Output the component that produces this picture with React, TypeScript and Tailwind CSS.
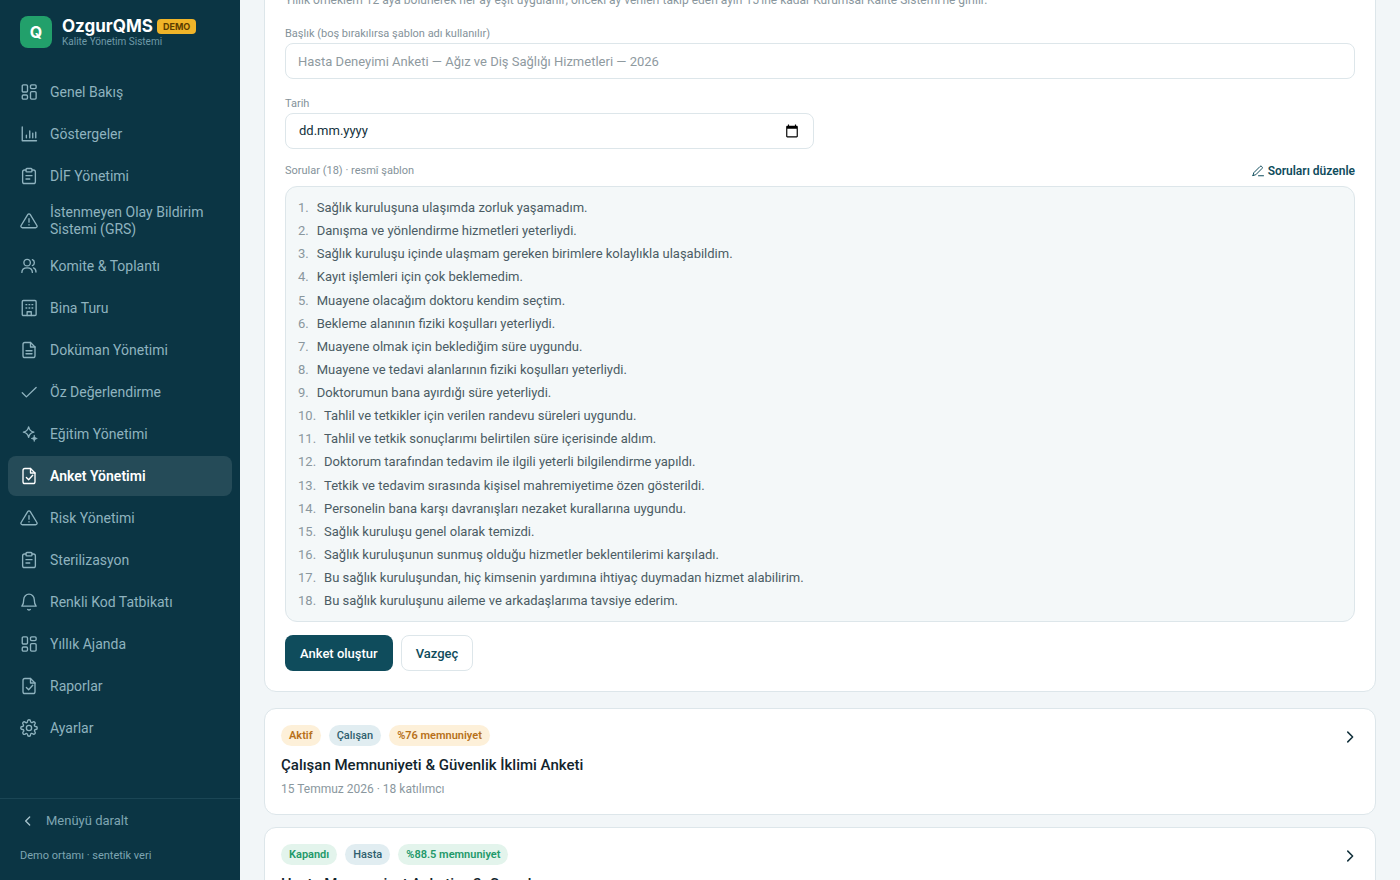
import type { ReactNode } from 'react'

interface NavItem {
  label: string
  icon: keyof typeof icons
  active?: boolean
}

interface Survey {
  id: number
  status: string
  audience: string
  score: string
  closed: boolean
  title: string
  meta: string
}

const icons = {
  grid: (
    <>
      <rect x="3" y="2.5" width="7" height="9.5" rx="1.5" />
      <rect x="14" y="2.5" width="7.5" height="5" rx="1.5" />
      <rect x="3" y="16" width="7" height="5.5" rx="1.5" />
      <rect x="14" y="11.5" width="7.5" height="10" rx="1.5" />
    </>
  ),
  chart: <path d="M3 2.5V21h19M8.500 17v-3.500M13 17V8M17 17v-6M21 17V9.500" />,
  clipboard: (
    <>
      <path d="M8 4H6a2.5 2.5 0 0 0-2.5 2.5v13A2.5 2.5 0 0 0 6 22h12a2.5 2.5 0 0 0 2.500-2.500v-13A2.500 2.500 0 0 0 18 4h-2" />
      <rect x="8" y="2" width="8" height="4.500" rx="1.200" />
      <path d="M8 11.500h8M8 16h5" />
    </>
  ),
  warning: (
    <>
      <path d="M10.300 3.400 1.500 18a2 2 0 0 0 1.700 3h17.600a2 2 0 0 0 1.700-3L13.700 3.400a2 2 0 0 0-3.400 0Z" />
      <path d="M12 9v4.500M12 17v.200" />
    </>
  ),
  users: (
    <>
      <circle cx="9.500" cy="7.500" r="4.300" />
      <path d="M2.500 20.500c0-3.700 3-6 7-6s7 2.300 7 6M16.500 3.600a4.200 4.200 0 0 1 0 7.800M18 14.500c2 .8 3.300 3 3.300 5.500" />
    </>
  ),
  building: (
    <>
      <rect x="3" y="2" width="18.500" height="20" rx="1.500" />
      <path d="M8 7.500h1M12 7.500h1M16 7.500h1M8 12h1M12 12h1M16 12h1M9.500 22v-5h5.500v5" />
    </>
  ),
  doc: (
    <>
      <path d="M14 2H6.500A2.500 2.500 0 0 0 4 4.500v15A2.500 2.500 0 0 0 6.500 22h11a2.500 2.500 0 0 0 2.500-2.500V8l-6-6Z" />
      <path d="M14 2v6h6M8 13h8M8 17h8" />
    </>
  ),
  check: <path d="m3 13 5.500 5.500L21.500 6" />,
  sparkle: (
    <>
      <path d="M11.500 2.500c.9 4.500 2.500 6.100 7 7-4.500.9-6.100 2.500-7 7-.9-4.500-2.500-6.100-7-7 4.500-.9 6.100-2.500 7-7Z" />
      <path
        d="M19 14c.6 2.700 1.300 3.400 4 4-2.700.6-3.400 1.300-4 4-.6-2.700-1.300-3.400-4-4 2.700-.6 3.400-1.300 4-4Z"
        fill="currentColor"
        strokeWidth="1"
      />
    </>
  ),
  docCheck: (
    <>
      <path d="M14 2H6.500A2.500 2.500 0 0 0 4 4.500v15A2.500 2.500 0 0 0 6.500 22h11a2.500 2.500 0 0 0 2.500-2.500V8l-6-6Z" />
      <path d="M14 2v6h6M8.500 14l3 3 5.500-6" />
    </>
  ),
  bell: (
    <>
      <path d="M12 1.500a7 7 0 0 0-7 7c0 5-1 7-2.500 9h19c-1.500-2-2.500-4-2.500-9a7 7 0 0 0-7-7Z" />
      <path d="M10.300 22c1 .7 2.400.7 3.400 0" />
    </>
  ),
  gear: (
    <>
      <circle cx="12" cy="12" r="3.500" />
      <path d="M19.400 15a1.650 1.650 0 0 0 .33 1.820l.06.06a2 2 0 1 1-2.830 2.830l-.06-.06a1.650 1.650 0 0 0-2.800 1.170V21a2 2 0 1 1-4 0v-.09a1.650 1.650 0 0 0-2.890-1.090l-.06.06a2 2 0 1 1-2.830-2.830l.06-.06A1.650 1.650 0 0 0 3.090 14H3a2 2 0 1 1 0-4h.09a1.650 1.650 0 0 0 1.170-2.800l-.06-.06a2 2 0 1 1 2.830-2.830l.06.06A1.650 1.650 0 0 0 10 3.090V3a2 2 0 1 1 4 0v.09a1.650 1.650 0 0 0 2.820 1.170l.06-.06a2 2 0 1 1 2.830 2.830l-.06.06A1.650 1.650 0 0 0 20.910 10H21a2 2 0 1 1 0 4h-.09a1.650 1.650 0 0 0-1.510 1Z" />
    </>
  ),
  left: <path d="m14.500 6-6 6 6 6" />,
  right: <path d="m9 5.500 6.500 6.500L9 18.500" />,
  pencil: (
    <path d="m2 21 1.500-5.500L16 3a2.400 2.400 0 0 1 3.400 0l.6.600a2.400 2.400 0 0 1 0 3.400L7.500 19.500 2 21ZM13 21.500h10" />
  ),
} satisfies Record<string, ReactNode>

const navItems: NavItem[] = [
  { label: 'Genel Bakış', icon: 'grid' },
  { label: 'Göstergeler', icon: 'chart' },
  { label: 'DİF Yönetimi', icon: 'clipboard' },
  { label: 'İstenmeyen Olay Bildirim Sistemi (GRS)', icon: 'warning' },
  { label: 'Komite & Toplantı', icon: 'users' },
  { label: 'Bina Turu', icon: 'building' },
  { label: 'Doküman Yönetimi', icon: 'doc' },
  { label: 'Öz Değerlendirme', icon: 'check' },
  { label: 'Eğitim Yönetimi', icon: 'sparkle' },
  { label: 'Anket Yönetimi', icon: 'docCheck', active: true },
  { label: 'Risk Yönetimi', icon: 'warning' },
  { label: 'Sterilizasyon', icon: 'clipboard' },
  { label: 'Renkli Kod Tatbikatı', icon: 'bell' },
  { label: 'Yıllık Ajanda', icon: 'grid' },
  { label: 'Raporlar', icon: 'docCheck' },
  { label: 'Ayarlar', icon: 'gear' },
]

const questions = [
  'Sağlık kuruluşuna ulaşımda zorluk yaşamadım.',
  'Danışma ve yönlendirme hizmetleri yeterliydi.',
  'Sağlık kuruluşu içinde ulaşmam gereken birimlere kolaylıkla ulaşabildim.',
  'Kayıt işlemleri için çok beklemedim.',
  'Muayene olacağım doktoru kendim seçtim.',
  'Bekleme alanının fiziki koşulları yeterliydi.',
  'Muayene olmak için beklediğim süre uygundu.',
  'Muayene ve tedavi alanlarının fiziki koşulları yeterliydi.',
  'Doktorumun bana ayırdığı süre yeterliydi.',
  'Tahlil ve tetkikler için verilen randevu süreleri uygundu.',
  'Tahlil ve tetkik sonuçlarımı belirtilen süre içerisinde aldım.',
  'Doktorum tarafından tedavim ile ilgili yeterli bilgilendirme yapıldı.',
  'Tetkik ve tedavim sırasında kişisel mahremiyetime özen gösterildi.',
  'Personelin bana karşı davranışları nezaket kurallarına uygundu.',
  'Sağlık kuruluşu genel olarak temizdi.',
  'Sağlık kuruluşunun sunmuş olduğu hizmetler beklentilerimi karşıladı.',
  'Bu sağlık kuruluşundan, hiç kimsenin yardımına ihtiyaç duymadan hizmet alabilirim.',
  'Bu sağlık kuruluşunu aileme ve arkadaşlarıma tavsiye ederim.',
]

const surveys: Survey[] = [
  {
    id: 1,
    status: 'Aktif',
    audience: 'Çalışan',
    score: '%76 memnuniyet',
    closed: false,
    title: 'Çalışan Memnuniyeti & Güvenlik İklimi Anketi',
    meta: '15 Temmuz 2026 · 18 katılımcı',
  },
  {
    id: 2,
    status: 'Kapandı',
    audience: 'Hasta',
    score: '%88.5 memnuniyet',
    closed: true,
    title: 'Hasta Memnuniyet Anketi — 2. Çeyrek',
    meta: '30 Haziran 2026 · 42 katılımcı',
  },
]

function Icon({ name, className }: { name: keyof typeof icons; className: string }) {
  return (
    <svg
      viewBox="0 0 24 24"
      fill="none"
      stroke="currentColor"
      strokeLinecap="round"
      strokeLinejoin="round"
      aria-hidden="true"
      className={`shrink-0 ${className}`}
    >
      {icons[name]}
    </svg>
  )
}

function Sidebar() {
  return (
    <aside className="flex w-60 shrink-0 flex-col bg-[#0b3544] text-[#8fb3bf]">
      <div className="flex items-center gap-2.5 px-5 pt-4 pb-6">
        <div className="flex size-8 items-center justify-center rounded-lg bg-[#22a06b] font-['Inter',sans-serif] text-base font-bold text-white">
          Q
        </div>
        <div>
          <div className="flex items-center gap-1">
            <span className="font-['Inter',sans-serif] text-[17px] leading-5 font-bold text-white">OzgurQMS</span>
            <span className="rounded bg-[#f0b429] px-1.5 font-['Inter',sans-serif] text-[9px] leading-[15px] font-bold text-[#5c3d00]">
              DEMO
            </span>
          </div>
          <div className="text-[10px] leading-3 text-[#6f9aa8]">Kalite Yönetim Sistemi</div>
        </div>
      </div>

      <nav className="flex flex-1 flex-col gap-0.5 px-2">
        {navItems.map(item => (
          <a
            key={item.label}
            href="#"
            aria-current={item.active ? 'page' : undefined}
            className={`flex min-h-10 items-center gap-3 rounded-lg px-3 py-1.5 text-sm leading-[17px] ${
              item.active ? 'bg-[#254b58] font-semibold text-white' : ''
            }`}
          >
            <Icon name={item.icon} className="size-[18px] stroke-[1.8]" />
            <span>{item.label}</span>
          </a>
        ))}
      </nav>

      <div className="border-t border-[#1b4655] px-5 pt-2.5 pb-4">
        <button type="button" className="flex h-6 items-center gap-2.5 text-[13px] text-[#7ea5b2]">
          <Icon name="left" className="size-4 stroke-2 text-[#a9c5ce]" />
          Menüyü daralt
        </button>
        <p className="mt-[15px] text-[11px] leading-4 text-[#7ea5b2]">Demo ortamı · sentetik veri</p>
      </div>
    </aside>
  )
}

function DateField() {
  return (
    <div>
      <label htmlFor="date" className="block text-[11px] leading-[18px] text-[#84929a]">
        Tarih
      </label>
      <div className="flex h-9 items-center rounded-lg border border-[#dde6ea] pr-3.5 pl-[13px]">
        <input
          id="date"
          type="text"
          inputMode="numeric"
          placeholder="dd.mm.yyyy"
          className="min-w-0 flex-1 text-[13px] text-[#12303b] outline-none placeholder:text-[#12303b]"
        />
        <button type="button" aria-label="Takvimi aç" className="text-black">
          <svg viewBox="0 0 24 24" fill="currentColor" aria-hidden="true" className="size-3.5">
            <path d="M20 3h-1V1h-2v2H7V1H5v2H4c-1.100 0-2 .9-2 2v16c0 1.100.9 2 2 2h16c1.100 0 2-.9 2-2V5c0-1.100-.9-2-2-2zm0 18H4V8h16v13z" />
          </svg>
        </button>
      </div>
    </div>
  )
}

function SurveyForm() {
  return (
    <form className="rounded-xl border border-[#dde6ea] bg-white p-5">
      <p className="text-xs leading-[18px] text-[#8a979e]">
        Yıllık örneklem 12 aya bölünerek her ay eşit uygulanır; önceki ay verileri takip eden ayın 15’ine kadar Kurumsal Kalite Sistemi’ne girilir.
      </p>

      <div className="mt-4">
        <label htmlFor="title" className="block text-[11px] leading-[18px] text-[#84929a]">
          Başlık (boş bırakılırsa şablon adı kullanılır)
        </label>
        <input
          id="title"
          type="text"
          placeholder="Hasta Deneyimi Anketi — Ağız ve Diş Sağlığı Hizmetleri — 2026"
          className="block h-9 w-full rounded-lg border border-[#dde6ea] px-3 text-[13px] text-[#12303b] placeholder:text-[#8f9a9f]"
        />
      </div>

      <div className="mt-4 grid grid-cols-2 gap-3">
        <DateField />
      </div>

      <div className="mt-3 mb-[5px] flex items-center justify-between leading-5">
        <span className="text-[11px] text-[#84929a]">Sorular (18) · resmî şablon</span>
        <button type="button" className="flex items-center gap-1 text-xs leading-5 font-semibold text-[#0f4c5c]">
          <Icon name="pencil" className="size-3 stroke-2" />
          Soruları düzenle
        </button>
      </div>

      <ol className="space-y-0.5 rounded-xl border border-[#dde6ea] bg-[#f4f8f9] px-3 py-2.5 text-[13px] leading-relaxed text-[#4b5c64]">
        {questions.map((question, i) => (
          <li key={question} className="flex gap-2">
            <span className="text-[#8a979e]">{i + 1}.</span>
            {question}
          </li>
        ))}
      </ol>

      <div className="mt-[13px] flex gap-2 text-[13px] font-medium">
        <button type="button" className="h-9 rounded-lg bg-[#0f4c5c] px-[15px] text-white">
          Anket oluştur
        </button>
        <button type="button" className="h-9 rounded-lg border border-[#dde6ea] bg-white px-3.5 text-[#0f4c5c]">
          Vazgeç
        </button>
      </div>
    </form>
  )
}

function SurveyCard({ survey }: { survey: Survey }) {
  const tone = survey.closed ? 'bg-[#e3f4ec] text-[#22996a]' : 'bg-[#fdf0d9] text-[#b7701a]'

  return (
    <a href="#" className="flex items-start justify-between rounded-xl border border-[#dde6ea] bg-white p-4">
      <div>
        <div className="flex gap-2 text-[11px] leading-[21px] font-semibold">
          <span className={`rounded-full px-2 ${tone}`}>{survey.status}</span>
          <span className="rounded-full bg-[#e1edf1] px-2 font-medium text-[#2f5f6e]">{survey.audience}</span>
          <span className={`rounded-full px-2 ${tone}`}>{survey.score}</span>
        </div>
        <h3 className="mt-2 text-[15px] leading-[22px] font-medium text-[#12242c]">{survey.title}</h3>
        <p className="mt-1 text-xs leading-[18px] text-[#8a979e]">{survey.meta}</p>
      </div>
      <span className="flex h-6 items-center">
        <Icon name="right" className="size-[18px] stroke-2 text-[#12303b]" />
      </span>
    </a>
  )
}

export default function App() {
  return (
    <div className="flex h-screen overflow-hidden bg-[#f2f6f8] font-['Roboto','Noto_Sans',sans-serif]">
      <Sidebar />
      <main className="min-w-0 flex-1 overflow-hidden px-6">
        <div className="-mt-[30px]">
          <SurveyForm />
          <div className="mt-4 flex flex-col gap-3">
            {surveys.map(survey => (
              <SurveyCard key={survey.id} survey={survey} />
            ))}
          </div>
        </div>
      </main>
    </div>
  )
}
